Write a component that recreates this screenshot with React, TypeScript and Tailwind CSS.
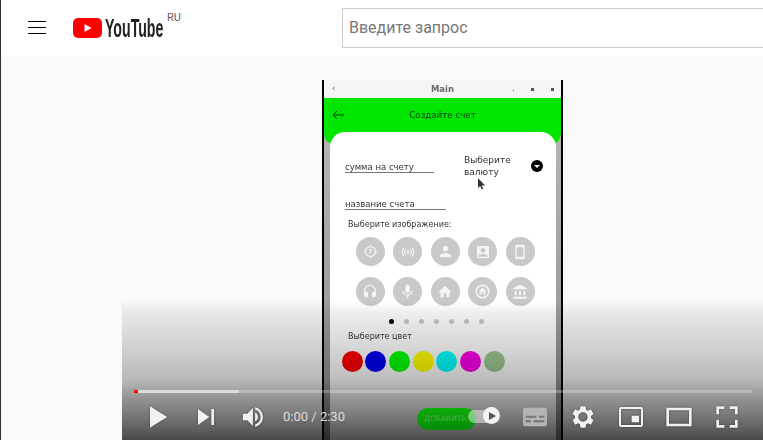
import React from 'react';
import { MdAccountBalance, MdAccountBox, MdHeadset, MdHome, MdMic, MdPerson, MdSmartphone } from 'react-icons/md';
import { Radio } from 'lucide-react';

function HelpTarget() {
  return (
    <svg width="15" height="15" viewBox="0 0 24 24" fill="none" stroke="#f4f4f4" strokeWidth="2">
      <circle cx="12" cy="12" r="8" />
      <path d="M12 1v3M12 20v3M1 12h3M20 12h3" />
      <text x="12" y="16" textAnchor="middle" fontSize="11" fontWeight="700" fill="#f4f4f4" stroke="none">?</text>
    </svg>
  );
}

function HomeCircle() {
  return (
    <svg width="15" height="15" viewBox="0 0 24 24" fill="none">
      <circle cx="12" cy="12" r="10" stroke="#f4f4f4" strokeWidth="2.5" />
      <path d="M10.500 17v-4h3v4h3v-5.500h2L12 6l-6.500 5.500h2V17z" fill="#f4f4f4" />
    </svg>
  );
}

const imageIcons = [
  <HelpTarget key="help" />,
  <Radio key="radio" size={14} color="#f4f4f4" strokeWidth={2} />,
  <MdPerson key="person" size={17} color="#f4f4f4" />,
  <MdAccountBox key="box" size={16} color="#f4f4f4" />,
  <MdSmartphone key="phone" size={16} color="#f4f4f4" />,
  <MdHeadset key="headset" size={16} color="#f4f4f4" />,
  <MdMic key="mic" size={17} color="#f4f4f4" />,
  <MdHome key="home" size={16} color="#f4f4f4" />,
  <HomeCircle key="homecircle" />,
  <MdAccountBalance key="bank" size={16} color="#f4f4f4" />,
];

const swatches = ['bg-[#ff0000]', 'bg-[#0000f4]', 'bg-[#00ff00]', 'bg-[#ffff00]', 'bg-[#00ffff]', 'bg-[#fa00e8]', 'bg-[#9ec892]'];

function Btn({ children, className = '' }: { children: React.ReactNode; className?: string }) {
  return <div className={`flex h-12 w-12 shrink-0 items-center justify-center ${className}`}>{children}</div>;
}

function Ctl({ d, size = 48 }: { d: string; size?: number }) {
  return (
    <svg width={size} height={size} viewBox="0 0 36 36" className="drop-shadow-[0_0_1px_rgba(0,0,0,0.4)]">
      <path d={d} fill="#f1f1f1" fillRule="evenodd" />
    </svg>
  );
}

function Phone() {
  return (
    <div className="mt-6 flex h-[360px] w-[241px] shrink-0 flex-col border-x-2 border-black bg-linear-to-b from-[#bcbcbc] to-[#8c8c8c] font-['DejaVu_Sans',sans-serif] blur-[0.4px]">
      <div className="grid h-[18px] shrink-0 grid-cols-3 items-center bg-[#f5f5f3] px-2 text-[8.500px]">
        <span className="text-[8px] leading-none text-[#555]">‹</span>
        <span className="text-center font-bold text-[#6a6a6a]">Main</span>
        <div className="-mr-[1px] flex justify-end gap-[17px]">
          <span className="mt-[2px] h-px w-px bg-[#555]" />
          <span className="h-[3px] w-[3px] bg-[#555]" />
          <span className="h-[3px] w-[3px] bg-[#555]" />
        </div>
      </div>
      <div className="grid h-[45px] shrink-0 grid-cols-[1fr_auto_1fr] rounded-b-[6px_11px] bg-[#00e600] pt-[11px] text-[8.700px] text-[#063a06]">
        <svg width="12" height="10" viewBox="0 0 12 10" fill="none" stroke="#063a06" strokeWidth="1" className="mt-[1px] ml-[8px]">
          <path d="M12 5H1M5 1 1 5l4 4" />
        </svg>
        <span className="leading-3">Создайте счет</span>
      </div>
      <div className="-mt-[11px] mr-[5px] ml-[6px] flex min-h-0 flex-1 flex-col overflow-hidden rounded-t-[15px] bg-white pt-[22px] pl-[15px] text-[8.500px] text-[#333]">
        <div className="flex items-start">
          <div className="mt-[8px] h-[11px] w-[89px] border-b border-[#777] leading-[10px]">сумма на счету</div>
          <div className="relative ml-[30px] w-[60px] text-[9px] leading-3">
            Выберите
            <br />
            валюту
            <svg width="8" height="12" viewBox="0 0 8 12" className="absolute top-[24px] left-[13px]">
              <path d="M1 0v10l2.200-2 1.500 3.500 1.500-.7L4.700 7.500H8z" fill="#333" />
            </svg>
          </div>
          <div className="mt-[6px] ml-[7px] flex h-3 w-3 items-center justify-center rounded-full bg-black">
            <span className="h-0 w-0 border-x-[3px] border-t-[3px] border-x-transparent border-t-white" />
          </div>
        </div>
        <div className="mt-[21px] h-[11px] w-[101px] border-b border-[#777] leading-[10px]">название счета</div>
        <div className="mt-[10px] ml-[3px] text-[8px] leading-[10px]">Выберите изображение:</div>
        <div className="mt-[7px] ml-[10.500px] grid w-[179px] grid-cols-5 gap-x-[8.500px] gap-y-[11px]">
          {imageIcons.map((icon, idx) => (
            <div key={idx} className="flex h-[29px] w-[29px] items-center justify-center rounded-full bg-[#c9c9c9]">
              {icon}
            </div>
          ))}
        </div>
        <div className="mt-[13px] ml-[43.500px] flex gap-[10px]">
          {[0, 1, 2, 3, 4, 5, 6].map((i) => (
            <span key={i} className={i === 0 ? 'h-[5px] w-[5px] rounded-full bg-black' : 'h-[5px] w-[5px] rounded-full bg-[#c9c9c9]'} />
          ))}
        </div>
        <div className="mt-[8px] ml-[3px] text-[8px] leading-[10px]">Выберите цвет</div>
        <div className="mt-[9px] -ml-[3.500px] flex gap-[2.700px]">
          {swatches.map((c) => (
            <span key={c} className={`h-[21px] w-[21px] shrink-0 rounded-full ${c}`} />
          ))}
        </div>
      </div>
    </div>
  );
}

function Controls() {
  return (
    <div className="absolute inset-x-0 bottom-0 h-[144px] bg-[linear-gradient(to_bottom,rgba(0,0,0,0)_3%,rgba(0,0,0,0.07)_12%,rgba(0,0,0,0.16)_35%,rgba(0,0,0,0.26)_58%,rgba(0,0,0,0.42)_72%,rgba(0,0,0,0.55)_86%,rgba(0,0,0,0.7)_100%)] pt-[94px]">
      {/* button of the recorded app, it keeps its colour through the shade */}
      <div className="absolute top-[112px] left-[295px] flex h-[22px] w-[59px] items-center rounded-full bg-linear-to-b from-[#0cae0c] to-[#088a08] pl-[7px] font-['DejaVu_Sans',sans-serif] text-[7.500px] text-[#48b048] blur-[0.4px]">
        ДОБАВИТЬ
      </div>
      <div className="relative mx-3 flex h-[3px] w-[618px] bg-white/25">
        <div className="h-full w-[4px] bg-[#f00]" />
        <div className="h-full w-[101px] bg-white/50" />
      </div>
      <div className="relative flex h-12 items-center px-3">
        <Btn>
          <Ctl d="M12 26 18.500 22V14L12 10zM18.500 22 25 18 18.500 14z" />
        </Btn>
        <Btn>
          <Ctl d="M12 24 20.500 18 12 12zM22 12v12h2V12z" />
        </Btn>
        <Btn className="justify-start pl-[4px]">
          <Ctl
            size={40}
            d="M8 21h4l5 5V10l-5 5H8zM19 14v8c1.480-.68 2.500-2.230 2.500-4 0-1.740-1.020-3.260-2.500-4zM19 11.290C21.890 12.150 24 14.830 24 18s-2.110 5.850-5 6.710v2.060c4.010-.91 7-4.490 7-8.770s-2.990-7.860-7-8.770z"
          />
        </Btn>
        <span className="ml-[5px] font-['Roboto',sans-serif] text-[13px] whitespace-nowrap text-[#dddddd]">0:00 / 2:30</span>
        <div className="ml-auto flex">
          <div className="relative h-12 w-12 shrink-0">
            <div className="absolute top-[17px] left-[5px] h-[13px] w-[28px] rounded-full bg-white/45" />
            <div className="absolute top-[14px] left-[20px] flex h-[17px] w-[17px] items-center justify-center rounded-full bg-[#f4f4f4]">
              <span className="ml-[2px] h-0 w-0 border-y-[4.500px] border-l-[7px] border-y-transparent border-l-[#555]" />
            </div>
          </div>
          <Btn>
            <svg width="48" height="48" viewBox="0 0 36 36">
              <path
                fillRule="evenodd"
                fill="#b4b4b4"
                d="M11 11h14a2 2 0 0 1 2 2v10a2 2 0 0 1-2 2H11a2 2 0 0 1-2-2V13a2 2 0 0 1 2-2zM11 17h8v1.500h-8zM21 17h4v1.500h-4zM11 20.500h4V22h-4zM17 20.500h8V22h-8z"
              />
            </svg>
          </Btn>
          <Btn>
            <Ctl d="M23.940 18.780c.03-.25.05-.51.05-.78s-.02-.53-.05-.78l1.680-1.320c.15-.12.19-.33.09-.51l-1.600-2.760c-.1-.18-.31-.24-.48-.18l-1.990.8c-.42-.32-.86-.58-1.350-.78L20 10.340c-.03-.19-.19-.34-.39-.34h-3.200c-.2 0-.36.15-.39.34l-.3 2.120c-.49.2-.94.47-1.350.78l-1.990-.8c-.18-.07-.39 0-.48.18l-1.600 2.760c-.1.18-.06.39.09.51l1.680 1.320c-.03.25-.05.52-.05.78s.02.53.05.78l-1.680 1.320c-.15.12-.19.33-.09.51l1.600 2.760c.1.18.31.24.48.18l1.990-.8c.42.32.86.58 1.350.78l.3 2.120c.03.19.19.34.39.34h3.200c.2 0 .36-.15.39-.34l.3-2.120c.49-.2.94-.47 1.350-.78l1.990.8c.18.07.39 0 .48-.18l1.600-2.760c.1-.18.06-.39-.09-.51zM18 21.500c-1.930 0-3.500-1.570-3.500-3.500s1.570-3.500 3.500-3.500 3.500 1.570 3.500 3.500-1.570 3.500-3.500 3.500z" />
          </Btn>
          <Btn>
            <Ctl d="M10.500 10.500h15a1.500 1.500 0 0 1 1.500 1.500v12a1.500 1.500 0 0 1-1.500 1.500h-15A1.500 1.500 0 0 1 9 24V12a1.500 1.500 0 0 1 1.500-1.500zM10.500 12v12h15V12zM18.500 17h5.500v5h-5.500z" />
          </Btn>
          <Btn>
            <Ctl d="M8.500 11h19v14h-19zM10.500 13v10h15V13z" />
          </Btn>
          <Btn>
            <Ctl d="M10 16h2v-4h4v-2h-6zM20 10v2h4v4h2v-6zM24 24h-4v2h6v-6h-2zM12 20h-2v6h6v-2h-4z" />
          </Btn>
        </div>
      </div>
    </div>
  );
}

export default function App() {
  return (
    <div className="flex h-[440px] w-[763px] flex-col overflow-hidden border-l border-[#333] bg-white font-['Roboto',sans-serif]">
      <header className="flex h-14 shrink-0 items-start bg-white">
        <div className="mt-[21px] ml-[27px] flex flex-col gap-[5px]">
          <span className="h-px w-[18px] bg-black" />
          <span className="h-px w-[18px] bg-black" />
          <span className="h-px w-[18px] bg-black" />
        </div>
        <svg width="29" height="20" viewBox="0 0 29 20" className="mt-[18px] ml-[27px] shrink-0">
          <rect width="29" height="20" rx="5" fill="#f00" />
          <path d="M11.500 6v8l7-4z" fill="#fff" />
        </svg>
        <div className="mt-[14px] ml-[3px] w-[60px] shrink-0 overflow-visible">
          <span className="block origin-left scale-x-[0.565] font-['Liberation_Sans',sans-serif] text-[25px] leading-7 font-bold whitespace-nowrap text-[#222]">YouTube</span>
        </div>
        <span className="mt-[11px] ml-[2px] w-[14px] shrink-0 text-[11px] leading-[13px] text-[#606060]">RU</span>
        <div className="mt-2 ml-[161px] flex h-[40px] w-[440px] shrink-0 items-center border border-[#ccc] pl-[6px] text-base text-[#777]">Введите запрос</div>
      </header>
      <main className="flex min-h-0 flex-1 bg-[#f9f9f9] pl-[121px]">
        <div className="relative flex h-full flex-1 justify-center overflow-hidden">
          <Phone />
          <Controls />
        </div>
      </main>
    </div>
  );
}
